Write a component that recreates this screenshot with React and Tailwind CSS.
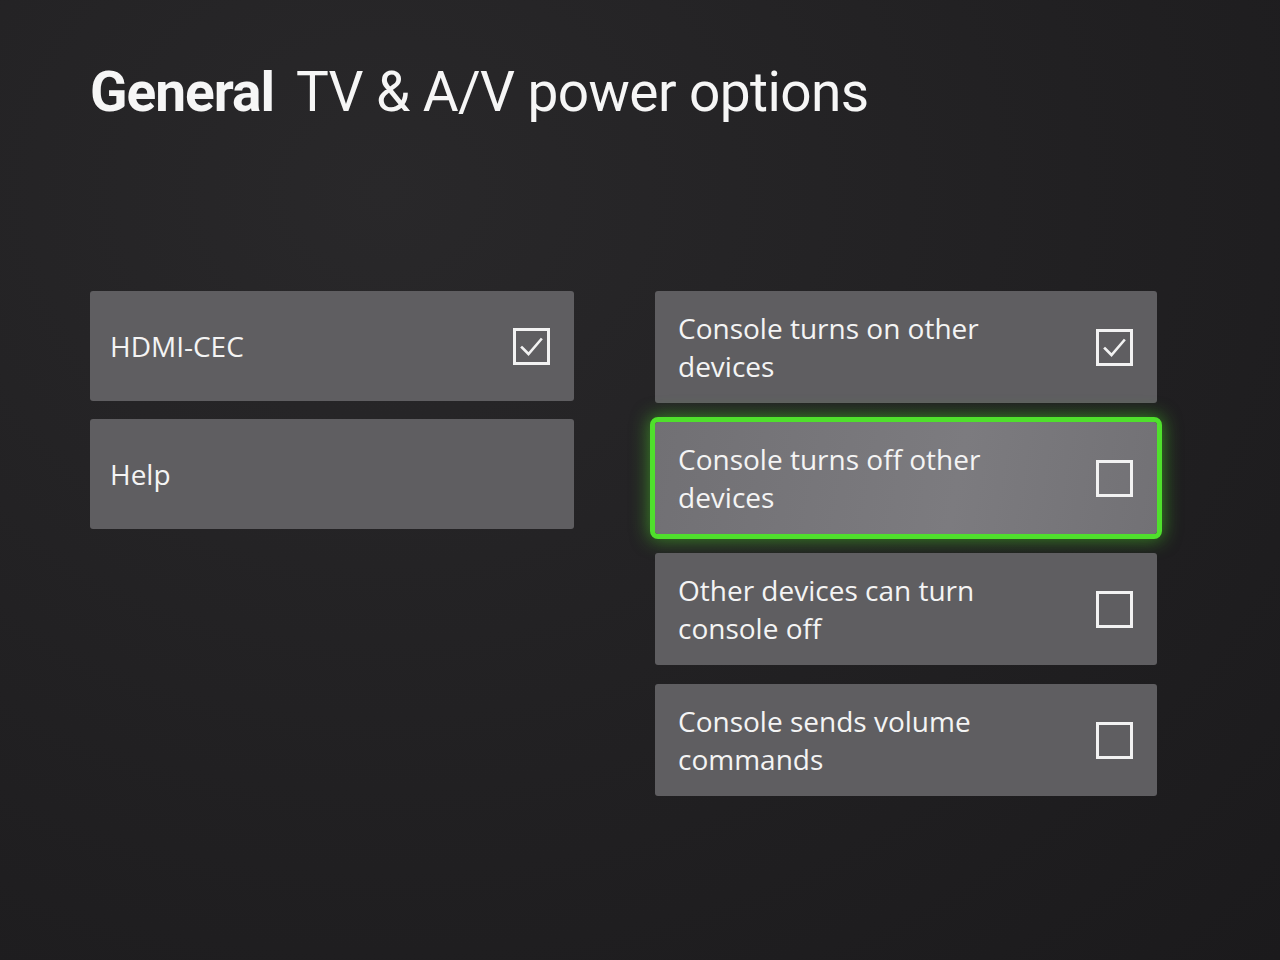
import React from "react";

function Box({ checked }) {
  return (
    <div className="w-[37px] h-[37px] shrink-0 border-[3px] border-[#f2f2f2] flex items-center justify-center">
      {checked && (
        <svg width="27" height="27" viewBox="0 0 27 27" fill="none">
          <path d="M4 14.5 L10.5 21 L23 6.5" stroke="#f2f2f2" strokeWidth="2.6" strokeLinecap="square" />
        </svg>
      )}
    </div>
  );
}

function Card({ label, checked, hasBox, focused, left }) {
  return (
    <div
      className={
        "rounded-[3px] flex items-center justify-between pr-[24px] " +
        (left ? "h-[110px] pl-[20px] " : "h-[112px] pl-[23px] ") +
        (focused
          ? "bg-[linear-gradient(100deg,#717074_0%,#7c7b7f_60%,#727175_100%)] outline-[5px] outline-solid outline-[#4fe02c] shadow-[0_0_18px_6px_rgba(80,230,40,0.5)]"
          : "bg-[#5f5e61]")
      }
    >
      <div
        className="text-[#f4f4f4] text-[28px] leading-[38px] whitespace-pre-line"
        style={{ fontFamily: '"Open Sans", "Noto Sans", sans-serif' }}
      >
        {label}
      </div>
      {hasBox && <Box checked={checked} />}
    </div>
  );
}

export default function App() {
  return (
    <div className="w-[1280px] h-[960px] overflow-hidden bg-[radial-gradient(ellipse_at_30%_20%,#29282a_0%,#212022_55%,#1b1a1c_100%)] pl-[90px] pt-[60px]">
      <div
        className="text-[#f6f6f6] text-[55px] leading-[64px] flex items-baseline"
        style={{ fontFamily: 'Roboto, "Open Sans", sans-serif' }}
      >
        <span className="font-bold tracking-[-1px]">General</span>
        <span className="ml-[22px] tracking-[-0.6px]">TV &amp; A/V power options</span>
      </div>
      <div className="flex mt-[167px] gap-[81px]">
        <div className="w-[484px] flex flex-col gap-[18px]">
          <Card left label="HDMI-CEC" hasBox checked />
          <Card left label="Help" />
        </div>
        <div className="w-[502px] flex flex-col gap-[19px]">
          <Card label={"Console turns on other\ndevices"} hasBox checked />
          <Card label={"Console turns off other\ndevices"} hasBox focused />
          <Card label={"Other devices can turn\nconsole off"} hasBox />
          <Card label={"Console sends volume\ncommands"} hasBox />
        </div>
      </div>
    </div>
  );
}
